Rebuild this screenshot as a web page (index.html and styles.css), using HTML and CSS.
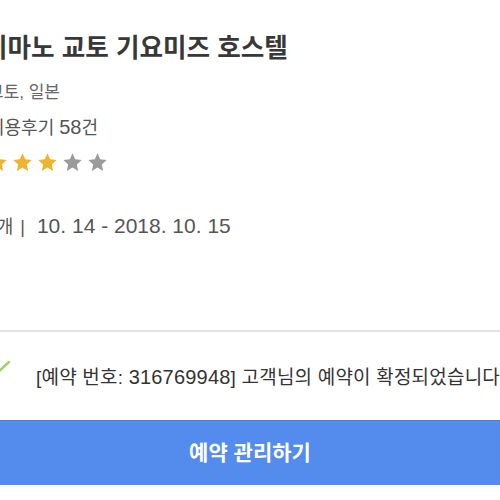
FILE: index.html
```html
<!DOCTYPE html>
<html lang="ko">
<head>
<meta charset="utf-8">
<link rel="stylesheet" href="styles.css">
</head>
<body>
<div class="page">
  <section class="hotel">
    <h1 class="title">이마노 교토 기요미즈 호스텔</h1>
    <p class="location">교토, 일본</p>
    <p class="reviews">이용후기 <span class="num">58</span>건</p>
    <div class="stars">
      <svg class="star on" viewBox="0 0 24 24"><path d="M12 1.5l3.1 6.9 7.4.8-5.6 5 1.6 7.4L12 17.8l-6.5 3.8 1.6-7.4-5.6-5 7.4-.8z"/></svg>
      <svg class="star on" viewBox="0 0 24 24"><path d="M12 1.5l3.1 6.9 7.4.8-5.6 5 1.6 7.4L12 17.8l-6.5 3.8 1.6-7.4-5.6-5 7.4-.8z"/></svg>
      <svg class="star on" viewBox="0 0 24 24"><path d="M12 1.5l3.1 6.9 7.4.8-5.6 5 1.6 7.4L12 17.8l-6.5 3.8 1.6-7.4-5.6-5 7.4-.8z"/></svg>
      <svg class="star off" viewBox="0 0 24 24"><path d="M12 1.5l3.1 6.9 7.4.8-5.6 5 1.6 7.4L12 17.8l-6.5 3.8 1.6-7.4-5.6-5 7.4-.8z"/></svg>
      <svg class="star off" viewBox="0 0 24 24"><path d="M12 1.5l3.1 6.9 7.4.8-5.6 5 1.6 7.4L12 17.8l-6.5 3.8 1.6-7.4-5.6-5 7.4-.8z"/></svg>
    </div>
    <p class="dates"><span class="num">1</span>개<span class="sep">|</span><span class="num">10. 14 - 2018. 10. 15</span></p>
  </section>
  <hr class="divider">
  <div class="confirm">
    <svg class="check" viewBox="0 0 30 30"><path d="M1 3l8 8L21 0"/></svg>
    <span class="confirm-text">[예약 번호: <span class="num">316769948</span>] 고객님의 예약이 확정되었습니다.</span>
  </div>
</div>
<button class="manage">예약 관리하기</button>
</body>
</html>
```
FILE: styles.css
```css
html, body {
  margin: 0;
  padding: 0;
  background: #fff;
  overflow: hidden;
  width: 500px;
  height: 500px;
}
body {
  font-family: "Liberation Sans", "Noto Sans CJK KR", sans-serif;
  color: #333;
}
.page {
  margin-left: -12px;
  width: 600px;
}
.num {
  font-size: 20px;
}
.hotel {
  padding-top: 32px;
}
.title {
  margin: 0 0 0 -4px;
  font-size: 25.6px;
  line-height: 32px;
  font-weight: 700;
  color: #383838;
  white-space: nowrap;
}
.location {
  margin: 17px 0 0;
  font-size: 17px;
  line-height: 24px;
  color: #666;
}
.reviews {
  margin: 10px 0 0;
  font-size: 18px;
  line-height: 24px;
  color: #555;
}
.stars {
  display: flex;
  gap: 4px;
  margin-top: 12px;
  margin-left: -1px;
}
.star {
  width: 21px;
  height: 21px;
}
.star.on { fill: #f0b32e; }
.star.off { fill: #9b9b9b; }
.dates {
  margin: 41px 0 0 -3px;
  font-size: 18px;
  line-height: 24px;
  color: #555;
  white-space: nowrap;
}
.dates .num {
  font-size: 21px;
}
.sep {
  margin: 0 12px 0 7px;
  font-size: 18px;
}
.divider {
  border: 0;
  border-top: 2px solid #e2e2e2;
  margin: 91px 0 0 0;
  width: 600px;
}
.confirm {
  display: flex;
  align-items: center;
  gap: 18px;
  margin-top: 30px;
  white-space: nowrap;
}
.check {
  width: 30px;
  height: 30px;
  fill: none;
  stroke: #a3d16a;
  stroke-width: 2.5;
  stroke-linecap: round;
  overflow: visible;
}
.confirm-text {
  font-size: 19px;
  line-height: 24px;
  color: #333;
  letter-spacing: 0.2px;
}
.manage {
  display: block;
  width: 500px;
  height: 65px;
  margin-top: 28px;
  border: 0;
  border-top: 1px solid #4a80e2;
  background: #548ced;
  color: #fff;
  font-family: "Liberation Sans", "Noto Sans CJK KR", sans-serif;
  font-size: 21px;
  font-weight: 700;
  padding: 0 0 5px;
}
```
